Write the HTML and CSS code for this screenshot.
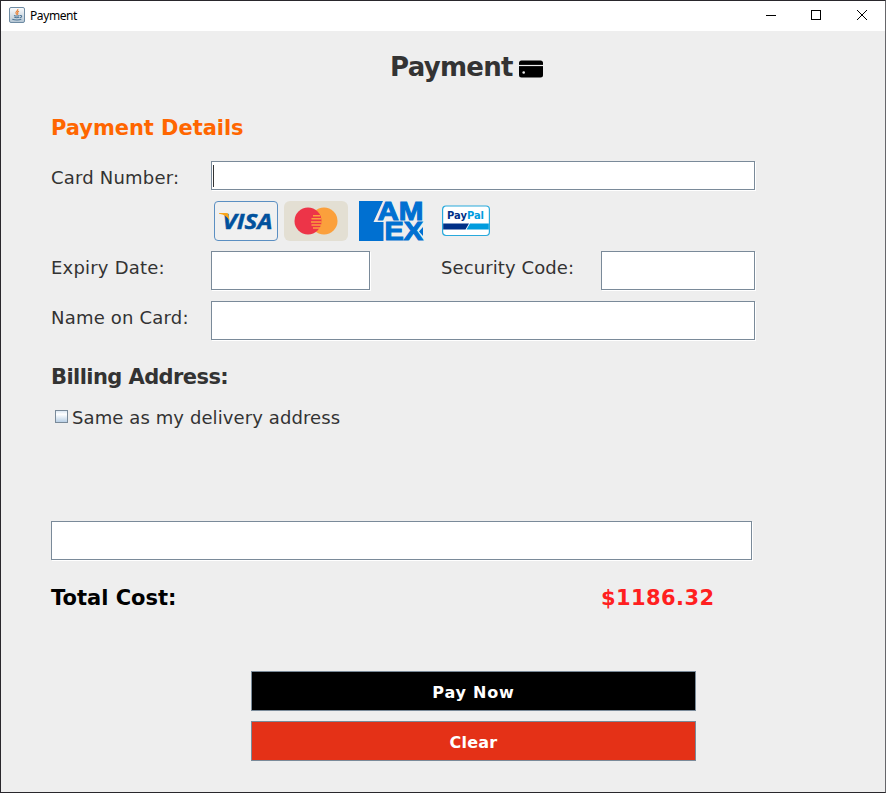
FILE: index.html
```html
<!DOCTYPE html>
<html lang="en">
<head>
<meta charset="utf-8">
<title>Payment</title>
<link rel="stylesheet" href="styles.css">
</head>
<body>
<div class="window">
  <header class="titlebar">
    <svg class="java" width="16" height="16" viewBox="0 0 16 16">
      <defs><linearGradient id="jg" x1="0" y1="0" x2="0" y2="1"><stop offset="0" stop-color="#fbfcfd"/><stop offset="1" stop-color="#b4c5d3"/></linearGradient></defs>
      <rect x=".5" y=".5" width="15" height="15" rx="1.5" fill="url(#jg)" stroke="#6e8ba3"/>
      <path d="M8.8 2c.7 2-2.8 2.6-1.8 4.3.3.5.8.9.9 1.4M10 4.3C8.300 5 8.300 5.700 8.800 6.400c.3.5 0 1-.5 1.400" fill="none" stroke="#e8833a" stroke-width="1.100"/>
      <path d="M5 8.500c1.500.6 4 .6 5.500 0M5.300 10.300c1.500.5 3.500.5 4.800 0M3.300 12.300c2.500 1 7 1 9 0M11 8.500c2.500-.5 2 2-.3 2.300" fill="none" stroke="#4f7696" stroke-width="1.100"/>
    </svg>
    <span class="caption">Payment</span>
    <svg class="controls" width="102" height="12" viewBox="0 0 102 12" fill="none" stroke="#000">
      <path d="M0 6.500H10M45.500 1.500h9v9h-9z" shape-rendering="crispEdges"/>
      <path d="M91 1L101 11M101 1L91 11"/>
    </svg>
  </header>
  <main class="content">
    <h1 class="title"><span>Payment</span>
      <svg width="26" height="18" viewBox="0 0 26 18"><rect x="1" y="0.500" width="24" height="17" rx="2.500"/><path d="M1 5.500H25" stroke="#eee" stroke-width="1.200"/><circle cx="5.700" cy="12.500" r="1.300" fill="#eee"/></svg>
    </h1>
    <h2 class="details">Payment Details</h2>
    <div class="row card-row"><label class="label-card">Card Number:</label><div class="field grow"><i class="caret"></i></div></div>
    <div class="logos">
      <svg width="66" height="40" viewBox="0 0 66 40">
        <rect x="1.500" y=".5" width="63" height="39" rx="3.500" fill="#f0f0f0" stroke="#5b8fc2"/>
        <text class="visa" x="9.500" y="27.800" textLength="50" lengthAdjust="spacingAndGlyphs">VISA</text>
        <path d="M6 12H13.500Q15.300 12 15.600 14L16.400 19.500Q13.500 14 6 12.800z" fill="#f9a51a"/>
      </svg>
      <svg class="mastercard" width="64" height="40" viewBox="0 0 64 40">
        <rect width="64" height="40" rx="6" fill="#e3dfd3"/>
        <circle cx="40" cy="20" r="13.500" fill="#fba03c"/><circle cx="24" cy="20" r="13.500" fill="#ed3448"/>
        <path d="M29 14.700H36M27.500 17.800H37M27 20.900H37.500M27.500 24H37M29 27.100H36" stroke="#fba03c" stroke-width="1.500"/>
      </svg>
      <svg class="amex" width="65" height="40" viewBox="0 0 65 40">
        <path d="M0 0H24L14.500 21H24.500V40H0z" fill="#0070d1"/>
        <text class="am" x="18.500" y="19.300" textLength="46" lengthAdjust="spacingAndGlyphs">AM</text>
        <text class="am" x="25.500" y="39.300" textLength="38.500" lengthAdjust="spacingAndGlyphs">EX</text>
        <path d="M64 26V35L60 30.400z" fill="#0070d1"/>
      </svg>
      <svg class="paypal" width="48" height="32" viewBox="0 0 48 32">
        <rect x=".6" y="1" width="46.800" height="29.500" rx="3.400" fill="#fff" stroke="#28a9dc" stroke-width="1.200"/>
        <path d="M1.200 18.500H27L23.500 24.500H1.200z" fill="#003087"/><path d="M28 18.500H46.800V24.500H24.500z" fill="#009cde"/>
        <text x="5" y="14" class="pp" textLength="37" lengthAdjust="spacingAndGlyphs"><tspan fill="#003087">Pay</tspan><tspan fill="#009cde">Pal</tspan></text>
      </svg>
    </div>
    <div class="row half-row"><label class="label-exp">Expiry Date:</label><div class="field expiry"></div><label class="label-sec">Security Code:</label><div class="field grow"></div></div>
    <div class="row name-row"><label class="label-name">Name on Card:</label><div class="field grow"></div></div>
    <h2 class="billing">Billing Address:</h2>
    <div class="same"><span class="box"></span><span class="same-label">Same as my delivery address</span></div>
    <div class="field address"></div>
    <div class="total"><span class="total-label">Total Cost:</span><span class="amount">$1186.32</span></div>
    <div class="buttons"><button class="pay">Pay Now</button><button class="clear">Clear</button></div>
  </main>
</div>
</body>
</html>
```
FILE: styles.css
```css
* { box-sizing: border-box; }
body { margin: 0; }
.window { width: 886px; height: 793px; overflow: hidden; border: 1px solid #29272c; border-right-color: #66666a; background: #eee; font-family: "DejaVu Sans", sans-serif; color: #333; }
.titlebar { height: 30px; background: #fff; display: flex; align-items: center; padding: 0 17px 2px 8px; }
.caption { margin-left: 5px; flex: 1; color: #000; font: 12px "Noto Sans", sans-serif; letter-spacing: -.4px; }
.content { padding: 0 50px; }
h1, h2 { margin: 0; font-weight: bold; white-space: nowrap; }
.title { height: 40px; margin: 16px 0 0 339px; display: flex; align-items: center; font-size: 26px; line-height: 40px; letter-spacing: -.7px; }
.title span { width: 128px; flex: none; }
.title svg { margin-top: 4px; }
h2 { font-size: 21px; line-height: 40px; height: 40px; }
.details { margin-top: 20px; padding-top: 1px; color: #f60; letter-spacing: -.05px; }
.row { display: flex; width: 705px; height: 40px; }
.row label { width: 160px; flex: none; padding-top: 7px; font-size: 18px; line-height: 20px; white-space: nowrap; }
.row .label-card { letter-spacing: .2px; }
.row .label-exp { letter-spacing: .2px; }
.row .label-sec { letter-spacing: .1px; }
.row .label-name { letter-spacing: .2px; }
.field { position: relative; height: 39px; background: #fff; border: 1px solid #7a8a99; box-shadow: 1px 1px 0 #fff; }
.grow { flex: 1; margin-right: 1px; }
.card-row { height: 30px; margin-top: 14px; }
.card-row .field { height: 29px; }
.caret { display: block; width: 1px; height: 22px; margin: 3px 0 0 1px; background: #333; }
.logos { display: flex; margin: 10px 0 0 162px; height: 40px; }
.mastercard { margin-left: 5px; }
.amex { margin-left: 11px; overflow: visible; }
.paypal { margin: 4px 0 0 18px; }
.visa { font: italic bold 22px "Open Sans", sans-serif; fill: #00519d; stroke: #00519d; stroke-width: .5px; }
.am { font: bold 25px "Liberation Sans", sans-serif; fill: #0070d1; stroke: #0070d1; stroke-width: 1px; }
.pp { font: bold 10px "DejaVu Sans", sans-serif; }
.half-row { margin-top: 10px; }
.expiry { width: 159px; margin-right: 71px; }
.name-row { margin-top: 10px; }
.billing { margin-top: 16px; letter-spacing: -.58px; }
.same { display: flex; align-items: center; height: 30px; margin-top: 5px; padding-left: 4px; font-size: 18px; white-space: nowrap; letter-spacing: .1px; }
.box { width: 13px; height: 13px; margin: -2px 4px 0 0; border: 1px solid #7a8a99; background: linear-gradient(#dde8f3, #fff 30%, #b8cfe5); }
.address { width: 701px; margin-top: 89px; }
.total { display: flex; margin-top: 17px; padding-top: 1px; height: 40px; font-size: 21px; font-weight: bold; line-height: 40px; }
.total-label { width: 550px; color: #000; }
.amount { color: #ff1f1f; letter-spacing: .4px; }
.buttons { display: flex; flex-direction: column; gap: 10px; width: 445px; margin: 54px 0 0 200px; }
button { height: 40px; padding: 2px 0 0; border: 1px solid #7a8a99; border-radius: 0; color: #fff; font: bold 16px "DejaVu Sans", sans-serif; }
.pay { background: #000; letter-spacing: .8px; }
.clear { background: #e43117; letter-spacing: .2px; }
```
